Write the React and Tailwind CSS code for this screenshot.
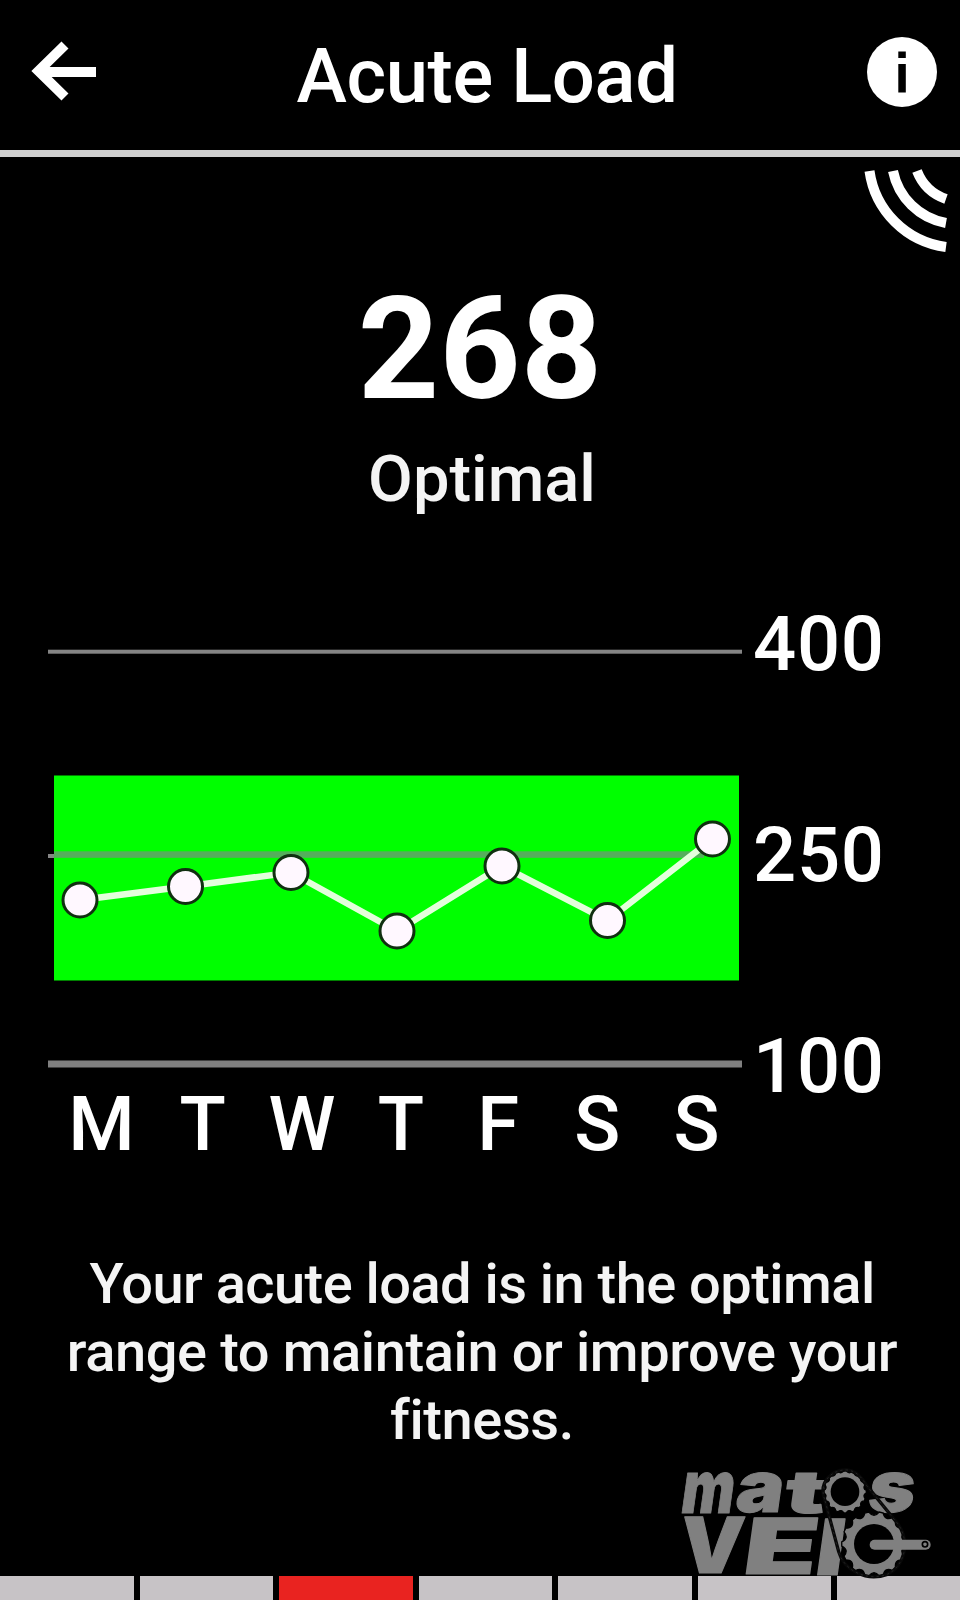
const points = [
  [80, 900], [185.5, 886.5], [291, 872.5], [397, 931], [502, 866], [607.5, 920.5], [712.5, 839],
];
const days = ["M", "T", "W", "T", "F", "S", "S"];
const dayInset = ["", "pl-[4px]", "pl-[4px]", "pl-[4px]", "", "", ""];
const segments = [false, false, true, false, false, false, false];

function gearPath(cx, cy, outer, root, teeth) {
  const parts = [];
  const step = (Math.PI * 2) / teeth;
  const at = (r, a) => `${(cx + r * Math.cos(a)).toFixed(1)} ${(cy + r * Math.sin(a)).toFixed(1)}`;
  for (let i = 0; i < teeth; i++) {
    const a = i * step;
    parts.push(`${i ? "L" : "M"}${at(outer, a - step * 0.14)}`);
    parts.push(`L${at(outer, a + step * 0.14)}`);
    parts.push(`Q${at(root - (outer - root) * 0.6, a + step * 0.5)} ${at(outer, a + step * 0.86)}`);
  }
  return parts.join(" ") + "Z";
}

function Header() {
  return (
    <header className="flex h-[157px] items-center justify-between border-b-[7px] border-[#d0d0d0] pr-[22px] pl-[30px]">
      <svg className="-mt-2 h-[62px] w-[67px]" viewBox="0 0 67 62" fill="none" stroke="#fff">
        <path d="M35 5 8.5 31 35 57M8 32H66" strokeWidth="10" />
      </svg>
      <h1 className="mt-0.5 ml-[11px] text-[76px] leading-none font-medium tracking-[-0.4px]">Acute Load</h1>
      <svg className="-mt-1.5 h-[72px] w-[72px]" viewBox="0 0 72 72">
        <circle cx="36" cy="36" r="35" fill="#fff" />
        <path d="M32.3 15.5h7.5v6.5h-7.5zM32.3 28h7.5v28.5h-7.5z" fill="#000" />
      </svg>
    </header>
  );
}

function Chart() {
  return (
    <svg className="h-[460px] w-[742px]" viewBox="0 620 742 460">
      <rect x="48" y="649.7" width="694" height="4" fill="#858585" />
      <rect x="48" y="854" width="6" height="4" fill="#858585" />
      <rect x="54" y="775.5" width="685" height="205" fill="#00ff00" />
      <rect x="54" y="851.3" width="650" height="6.5" fill="#55ae5c" />
      <rect x="48" y="1060.5" width="694" height="7" fill="#808080" />
      <polyline points={points.map((p) => p.join(",")).join(" ")} fill="none" stroke="#e4ffdc" strokeWidth="6.5" />
      {points.map(([x, y]) => (
        <circle key={x} cx={x} cy={y} r="17" fill="#fff8ff" stroke="#103010" strokeWidth="3" />
      ))}
    </svg>
  );
}

const chain = "M464 118C445 68 485 28 530 30C560 32 577 55 590 77L684 192C724 250 700 320 652 343C588 366 521 330 506 275Z";

function Logo() {
  return (
    <svg className="absolute right-0 bottom-0 h-[170px] w-[290px] overflow-visible" viewBox="0 -90 870 510">
      <g fill="#808080" stroke="#808080" strokeWidth="3" strokeLinejoin="round" fontFamily="Inter, sans-serif" fontWeight="900">
        <text transform="translate(28 158) skewX(-8)" fontSize="220" textLength="158" lengthAdjust="spacingAndGlyphs">m</text>
        <text transform="translate(191 157) skewX(-8)" fontSize="214" textLength="143" lengthAdjust="spacingAndGlyphs">a</text>
        <text transform="translate(338 158) skewX(-8)" fontSize="178" textLength="122" lengthAdjust="spacingAndGlyphs">t</text>
        <text transform="translate(588 157) skewX(-8)" fontSize="214" textLength="140" lengthAdjust="spacingAndGlyphs">s</text>
        <text transform="translate(24 339) skewX(-5)" fontSize="232" textLength="192" lengthAdjust="spacingAndGlyphs">V</text>
        <text transform="translate(212 341) skewX(-8)" fontSize="232" textLength="222" lengthAdjust="spacingAndGlyphs">E</text>
        <text transform="translate(428 345) skewX(-8)" fontSize="232" textLength="88" lengthAdjust="spacingAndGlyphs">l</text>
      </g>
      <path d={gearPath(525, 95, 64, 57, 16)} fill="#808080" stroke="#000" strokeWidth="4" />
      <circle cx="525" cy="95" r="43" fill="#000" />
      <path d={gearPath(612, 252, 97, 84, 14)} fill="#808080" stroke="#000" strokeWidth="4" />
      <circle cx="612" cy="252" r="60" fill="#000" />
      <path d={chain} fill="none" stroke="#080808" strokeWidth="10" />
      <path d={chain} fill="none" stroke="#222222" strokeWidth="3" strokeDasharray="7 9" />
      <rect x="599" y="239" width="183" height="30" rx="15" fill="#808080" />
      <circle cx="765" cy="253" r="8" fill="#808080" stroke="#000" strokeWidth="5" />
    </svg>
  );
}

export default function App() {
  return (
    <div className="relative flex h-[1600px] w-[960px] flex-col overflow-hidden bg-black font-['Roboto',sans-serif] text-white">
      <Header />
      <div className="flex h-[113px] justify-end pt-[12px] pr-[12px]">
        <svg className="h-[84px] w-[84px]" viewBox="864 169 84 84" fill="none" stroke="#fff" strokeWidth="10">
          <path d="M869.5 171A89 89 0 0 0 946 247" />
          <path d="M893 171A66 66 0 0 0 946 223" />
          <path d="M917 171A48 48 0 0 0 946 199" />
        </svg>
      </div>
      <section className="flex h-[350px] flex-col items-center">
        <p className="mt-[8px] text-[142px] leading-[144px] font-bold">268</p>
        <p className="mt-[21px] ml-1 text-[65px] leading-[72px] font-medium text-[#f4f4f4]">Optimal</p>
      </section>
      <section className="flex">
        <Chart />
        <div className="-mt-[81px] ml-[11px] flex flex-col text-[76px] leading-[211px] font-medium tracking-[0.7px]">
          <span>400</span>
          <span>250</span>
          <span>100</span>
        </div>
      </section>
      <div className="-mt-[88px] ml-[52px] grid w-[694px] grid-cols-7 text-center text-[76px] leading-[80px] font-medium">
        {days.map((day, i) => (
          <span key={i} className={dayInset[i]}>{day}</span>
        ))}
      </div>
      <p className="mt-[86px] ml-1 text-center text-[56px] leading-[68px] font-medium tracking-[-0.4px] text-[#f4f4f4]">
        <span className="tracking-[-0.55px]">Your acute load is in the optimal</span>
        <br />
        range to maintain or improve your
        <br />
        fitness.
      </p>
      <footer className="mt-auto grid h-[24px] w-[977px] shrink-0 grid-cols-7">
        {segments.map((active, i) => (
          <div key={i} className={active ? "mr-1.5 bg-[#e92320]" : "mr-1.5 bg-[#c7c3c6]"} />
        ))}
      </footer>
      <Logo />
    </div>
  );
}
